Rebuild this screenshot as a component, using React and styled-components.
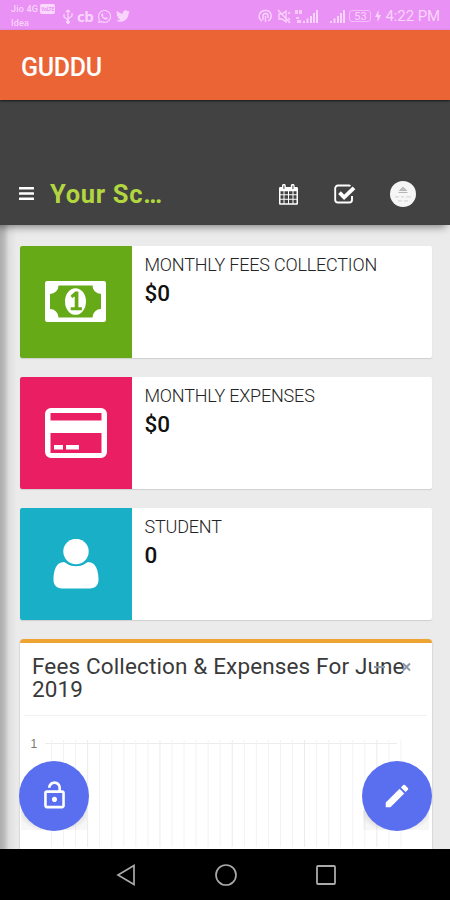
import React from "react";
import styled, { createGlobalStyle } from "styled-components";
import { FaWhatsapp, FaTwitter } from "react-icons/fa";
import { MdOutlineLockOpen, MdEdit } from "react-icons/md";

const GlobalStyle = createGlobalStyle`
  * { box-sizing: border-box; }
  body { margin: 0; background: #000; font-family: Roboto, sans-serif; }
  svg { display: block; flex: none; }
`;

const Screen = styled.div`
  position: relative;
  width: 450px;
  height: 900px;
  display: flex;
  flex-direction: column;
  overflow: hidden;
`;

const StatusBar = styled.header`
  height: 30px;
  flex: none;
  display: flex;
  align-items: center;
  justify-content: space-between;
  padding: 2px 10px 0 11px;
  background: #e991f5;
  color: #f9d5fc;
`;

const StatusGroup = styled.div`
  display: flex;
  align-items: center;
  gap: ${(p) => p.$gap}px;
`;

const Carrier = styled.div`
  width: 46px;
  margin-right: 2px;
  font-size: 9px;
  line-height: 14px;
  font-weight: 500;
  letter-spacing: 0.2px;
`;

const CarrierLine = styled.div`
  display: flex;
  align-items: center;
  gap: 2px;
  white-space: nowrap;
`;

const VolteBadge = styled.span`
  padding: 0 1px;
  border-radius: 2px;
  background: #f9d9fc;
  color: #e991f5;
  font-size: 5px;
  line-height: 10px;
  font-weight: 700;
  letter-spacing: -0.2px;
`;

const CbMark = styled.span`
  font: 700 15px/20px "Open Sans", sans-serif;
  letter-spacing: -0.5px;
`;

const Battery = styled.span`
  width: 22px;
  height: 12px;
  border: 1px solid #f3bdf9;
  border-radius: 3px;
  font-size: 11px;
  line-height: 11px;
  text-align: center;
`;

const SignalGap = styled.span`
  width: 4px;
`;

const Clock = styled.span`
  font-size: 15px;
  line-height: 20px;
  letter-spacing: -0.1px;
  white-space: nowrap;
`;

const AppBar = styled.div`
  position: relative;
  z-index: 2;
  height: 70px;
  flex: none;
  display: flex;
  align-items: center;
  padding: 4px 21px 0;
  background: #ea6435;
  color: #fff;
  font-size: 25px;
  font-weight: 500;
  letter-spacing: -0.3px;
  box-shadow: 0 1px 2px rgba(0, 0, 0, 0.65);
`;

const SiteHeader = styled.div`
  position: relative;
  z-index: 1;
  height: 125px;
  flex: none;
  display: flex;
  align-items: flex-end;
  padding: 0 34px 15px 19px;
  background: #424242;
  box-shadow: -4px 2px 8px rgba(0, 0, 0, 0.45);
`;

const HeaderRow = styled.div`
  flex: 1;
  height: 32px;
  display: flex;
  align-items: center;
`;

const Brand = styled.h1`
  width: 229px;
  margin: 0 0 0 16px;
  color: #b2d63f;
  font-size: 25.5px;
  line-height: 32px;
  font-weight: 700;
  letter-spacing: 0.7px;
`;

const HeaderIcons = styled.div`
  display: flex;
  align-items: center;
`;

const IconSlot = styled.div`
  margin-right: ${(p) => p.$after || 0}px;
`;

const Content = styled.main`
  height: 624px;
  flex: none;
  display: flex;
  flex-direction: column;
  gap: 19.2px;
  padding: 20.5px 18.5px 0 19.5px;
  overflow: hidden;
  background: linear-gradient(90deg, #adadad 0, #bababa 4px, #dedede 9px, #ebebeb 17px);
`;

const StatCard = styled.section`
  height: 112px;
  flex: none;
  display: flex;
  background: #fff;
  border-radius: 2px;
  box-shadow: 0 1px 1px rgba(0, 0, 0, 0.12);
`;

const StatIcon = styled.div`
  width: 112px;
  display: grid;
  place-items: center;
  border-radius: 2px 0 0 2px;
  background: ${(p) => p.$color};
`;

const StatText = styled.div`
  padding: 8px 0 0 13px;
  color: #242424;
`;

const StatLabel = styled.div`
  font-size: 18px;
  line-height: 22px;
  font-weight: 300;
  white-space: nowrap;
  letter-spacing: -0.2px;
`;

const StatValue = styled.div`
  margin-top: 4px;
  font-size: 22.5px;
  line-height: 27px;
  font-weight: 500;
  color: #111;
`;

const Panel = styled.section`
  height: 240px;
  flex: none;
  border-top: 4px solid #eea432;
  border-radius: 4px;
  background: #fff;
  box-shadow: 0 1px 2px rgba(0, 0, 0, 0.25);
`;

const PanelHead = styled.div`
  position: relative;
  height: 73px;
  margin: 0 5px 0 4px;
  padding: 12px 0 0 8.5px;
  border-bottom: 1px solid #f1f1f1;
`;

const PanelTitle = styled.h2`
  margin: 0;
  color: #3a3a3a;
  font-size: 22.5px;
  line-height: 23px;
  font-weight: 400;
  white-space: nowrap;
  letter-spacing: 0.14px;
`;

const PanelTools = styled.div`
  position: absolute;
  top: 18px;
  right: 15px;
  display: flex;
  gap: 16px;
`;

const Chart = styled.div`
  display: flex;
  padding: 20px 0 0 11px;
`;

const AxisLabel = styled.span`
  width: 14px;
  color: #777;
  font: 12px/16px "Liberation Sans", sans-serif;
`;

const Fab = styled.button`
  position: absolute;
  top: 760.5px;
  left: ${(p) => p.$left}px;
  z-index: 2;
  width: 70px;
  height: 70px;
  display: grid;
  place-items: center;
  padding: 0;
  border: 0;
  border-radius: 50%;
  background: #5a6ff0;
  color: #fff;
`;

const FabShade = styled.div`
  position: absolute;
  top: 810px;
  left: ${(p) => p.$left}px;
  z-index: 1;
  width: 66px;
  height: 20px;
  background: radial-gradient(ellipse at 50% 0, rgba(0, 0, 0, 0.24) 40%, rgba(0, 0, 0, 0.03) 80%);
`;

const NavBar = styled.nav`
  height: 51px;
  flex: none;
  display: flex;
  align-items: center;
  justify-content: center;
  gap: 77px;
  padding: 1px 0 0 1px;
  background: #000;
`;

const HeadsetIcon = () => (
  <svg width="15" height="15" viewBox="0 0 15 15" fill="none" stroke="currentColor" strokeWidth="1.4">
    <path d="M4 12C-1 9 1 1.500 7.500 1.500S15 9 10 12M5 11V7a2.500 2.500 0 0 1 5 0v2M7.500 7v6" />
  </svg>
);

const MuteIcon = () => (
  <svg width="14" height="15" viewBox="0 0 14 15" fill="none" stroke="currentColor" strokeWidth="1.3">
    <path d="M1 1l12 13M2 5v5h3l4 3V2L5 5zM11 5l2-2M11 9l2 2" />
  </svg>
);

const NetworkIcon = ({ detailed }) => (
  <svg width={detailed ? 23 : 15} height="15" viewBox={detailed ? "-8 0 23 15" : "0 0 15 15"} fill="currentColor">
    <path d="M0 12h2v2H0zM3.500 9.500h2V14h-2zM7 7h2v7H7zM10 4h2v10h-2zM13 1h2v13h-2z" />
    {detailed && <path d="M-8 1h3v4h-3zM-4 1h3v4h-3zM-7 8h3v2h-3zM-6 11h4v3h-4z" opacity=".85" />}
  </svg>
);

const ChargeIcon = () => (
  <svg width="6" height="12" viewBox="0 0 6 12" fill="currentColor">
    <path d="M3.500 0L0 7h2.500v5L6 5H3.500z" />
  </svg>
);

const UsbIcon = () => (
  <svg width="10" height="15" viewBox="0 0 10 15" fill="none" stroke="currentColor">
    <path d="M5 1v12M1 5v3l4 3M9 4v3L5 10M3 3l2-2 2 2" strokeWidth="1.200" />
    <circle cx="5" cy="13" r="1.500" fill="currentColor" />
  </svg>
);

const MenuIcon = () => (
  <svg width="15" height="14" viewBox="0 0 15 14" fill="#fff">
    <rect y="0" width="15" height="2.600" rx=".5" />
    <rect y="5.200" width="15" height="2.600" rx=".5" />
    <rect y="10.400" width="15" height="2.600" rx=".5" />
  </svg>
);

const CalendarIcon = () => (
  <svg width="19" height="21" viewBox="0 0 19 21">
    <path fill="#fff" fillRule="evenodd" d="M1.300 3H3V1.700C3 .7 3.700 0 4.600 0h.6c.9 0 1.600.7 1.600 1.700V3h5V1.700c0-1 .7-1.700 1.600-1.700h.6c.9 0 1.600.7 1.600 1.700V3h2.100c.7 0 1.300.6 1.300 1.300v15.200c0 .7-.6 1.300-1.300 1.300H1.300C.6 20.800 0 20.200 0 19.500V4.300C0 3.600.6 3 1.300 3zM4.400 1.500v3.600h1V1.500zm9 0v3.600h1V1.500zM1.500 7.300v3h3v-3zm4 0v3h3.500v-3zm4.500 0v3h3.500v-3zm4.500 0v3h3v-3zM1.500 11.300v3.400h3v-3.400zm4 0v3.400h3.500v-3.400zm4.500 0v3.400h3.500v-3.400zm4.500 0v3.400h3v-3.400zM1.500 15.700v3.600h3v-3.600zm4 0v3.600h3.500v-3.600zm4.500 0v3.600h3.500v-3.600zm4.500 0v3.600h3v-3.600z" />
  </svg>
);

const TaskIcon = () => (
  <svg width="22" height="20" viewBox="0 0 22 20" fill="none">
    <path d="M16.500 1.800a4 4 0 0 0-1.500-.3H4A2.800 2.800 0 0 0 1.200 4.300v11.400A2.800 2.800 0 0 0 4 18.500h11.200a2.800 2.800 0 0 0 2.800-2.800V12" stroke="#fff" strokeWidth="1.900" />
    <path d="M5.500 8.700l4.600 4.600L20 3.800" stroke="#fff" strokeWidth="3.900" />
  </svg>
);

const AvatarIcon = () => (
  <svg width="26" height="26" viewBox="0 0 26 26">
    <circle cx="13" cy="13" r="13" fill="#f6f6f6" />
    <path d="M10 9.500l3-3 3 3zM8.500 11.500h9" stroke="#b5b5b5" strokeWidth="1.200" fill="#c5c5c5" />
    <path d="M5 15.800h4m2 0h3m2 0h5M8 19.800h4m2 0h4" stroke="#d8d8d8" strokeWidth="1.300" />
  </svg>
);

const MoneyIcon = () => (
  <svg width="61" height="41" viewBox="0 0 61 41">
    <rect width="61" height="41" rx="2.200" fill="#fff" />
    <path d="M13.500 4.500h34a8.500 8.500 0 0 0 8.500 8.500v15a8.500 8.500 0 0 0-8.500 8.500h-34A8.500 8.500 0 0 0 5 28V13a8.500 8.500 0 0 0 8.500-8.500z" fill="#66aa18" />
    <ellipse cx="30.500" cy="20.500" rx="10.500" ry="13.300" fill="#fff" />
    <path d="M25.500 14.700l4.700-4.100h3.200v15.600h3.500v3H25.700v-3h4V15.400L27.300 17z" fill="#66aa18" />
  </svg>
);

const CardIcon = () => (
  <svg width="62" height="50" viewBox="0 0 62 50" fill="#fff">
    <path fillRule="evenodd" d="M6 0h50a6 6 0 0 1 6 6v38a6 6 0 0 1-6 6H6a6 6 0 0 1-6-6V6a6 6 0 0 1 6-6zM5.500 5v7.500h51V5zM5.500 25v20h51V25z" />
    <path d="M9 37h9v4.500H9zM21 37h13v4.500H21z" />
  </svg>
);

const StudentIcon = () => (
  <svg width="46" height="50" viewBox="0 0 46 50" fill="#fff">
    <path d="M11 23C3 23 .5 32 .5 40.500.5 46 3.500 49.500 9 49.500h28c5.500 0 8.500-3.500 8.500-9C45.500 32 43 23 35 23c-1 0-5 4.300-12 4.300S12 23 11 23z" />
    <circle cx="23" cy="12.500" r="12.700" />
  </svg>
);

const ToolIcon = ({ d }) => (
  <svg width="11" height="12" viewBox="0 0 11 12" fill="none" stroke="#8d98a8" strokeWidth="2">
    <path d={d} />
  </svg>
);

const GridLines = () => (
  <svg width="360" height="116" viewBox="0 0 360 116" fill="none">
    <path d="M0 7.500H352" stroke="#ececec" />
    {Array.from({ length: 30 }, (_, i) => (
      <path key={i} d={`M${6.5 + i * 12.05} 4V111`} stroke={i % 6 === 3 ? "#ebebeb" : "#f2f2f2"} />
    ))}
  </svg>
);

const stats = [
  { label: "MONTHLY FEES COLLECTION", value: "$0", color: "#66aa18", Icon: MoneyIcon },
  { label: "MONTHLY EXPENSES", value: "$0", color: "#e91e63", Icon: CardIcon },
  { label: "STUDENT", value: "0", color: "#19b0c7", Icon: StudentIcon },
];

export default function App() {
  return (
    <Screen>
      <GlobalStyle />
      <StatusBar>
        <StatusGroup $gap={4}>
          <Carrier>
            <CarrierLine>Jio 4G <VolteBadge>VoLTE</VolteBadge></CarrierLine>
            <CarrierLine>Idea</CarrierLine>
          </Carrier>
          <UsbIcon />
          <CbMark>cb</CbMark>
          <FaWhatsapp size={15} />
          <FaTwitter size={14} />
        </StatusGroup>
        <StatusGroup $gap={4}>
          <HeadsetIcon />
          <MuteIcon />
          <NetworkIcon detailed />
          <SignalGap />
          <NetworkIcon />
          <Battery>53</Battery>
          <ChargeIcon />
          <Clock>4:22 PM</Clock>
        </StatusGroup>
      </StatusBar>
      <AppBar>GUDDU</AppBar>
      <SiteHeader>
        <HeaderRow>
          <MenuIcon />
          <Brand>Your Sc…</Brand>
          <HeaderIcons>
            <IconSlot $after={36}><CalendarIcon /></IconSlot>
            <IconSlot $after={34}><TaskIcon /></IconSlot>
            <AvatarIcon />
          </HeaderIcons>
        </HeaderRow>
      </SiteHeader>
      <Content>
        {stats.map(({ label, value, color, Icon }) => (
          <StatCard key={label}>
            <StatIcon $color={color}><Icon /></StatIcon>
            <StatText>
              <StatLabel>{label}</StatLabel>
              <StatValue>{value}</StatValue>
            </StatText>
          </StatCard>
        ))}
        <Panel>
          <PanelHead>
            <PanelTitle>Fees Collection &amp; Expenses For June<br />2019</PanelTitle>
            <PanelTools>
              <ToolIcon d="M0 6H11" />
              <ToolIcon d="M2 2.500l7 7M9 2.500l-7 7" />
            </PanelTools>
          </PanelHead>
          <Chart>
            <AxisLabel>1</AxisLabel>
            <GridLines />
          </Chart>
        </Panel>
      </Content>
      <FabShade $left={21} />
      <FabShade $left={363} />
      <Fab $left={19} aria-label="Unlock"><MdOutlineLockOpen size={31} /></Fab>
      <Fab $left={362} aria-label="Edit"><MdEdit size={30} /></Fab>
      <NavBar>
        <svg width="22" height="22" viewBox="0 0 22 22" fill="none" stroke="#aaa" strokeWidth="1.700">
          <path d="M19 1.500v19L3 11z" />
        </svg>
        <svg width="24" height="24" viewBox="0 0 24 24" fill="none" stroke="#aaa" strokeWidth="1.700">
          <circle cx="12" cy="12" r="10" />
        </svg>
        <svg width="22" height="22" viewBox="0 0 22 22" fill="none" stroke="#aaa" strokeWidth="1.800">
          <rect x="2" y="2" width="18" height="18" rx="1" />
        </svg>
      </NavBar>
    </Screen>
  );
}
